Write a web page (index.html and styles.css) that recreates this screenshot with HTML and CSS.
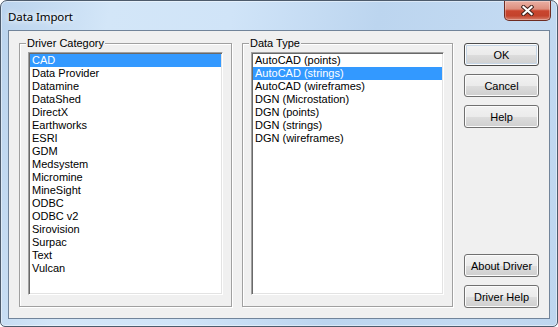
FILE: index.html
```html
<!DOCTYPE html>
<html lang="en">
<head>
  <meta charset="UTF-8">
  <title>Data Import</title>
  <link rel="stylesheet" href="styles.css">
</head>
<body>
  <div class="window">
    <div class="titlebar">
      <span class="title">Data Import</span>
      <button class="close" type="button">
        <svg width="13" height="11" viewBox="0 0 13 11">
          <path d="M2.5 2 L10.5 9 M10.5 2 L2.5 9" stroke="#41231e" stroke-width="4.2" stroke-linecap="square" fill="none"/>
          <path d="M2.5 2 L10.5 9 M10.5 2 L2.5 9" stroke="#fff" stroke-width="2.2" stroke-linecap="square" fill="none"/>
        </svg>
      </button>
    </div>

    <div class="client">
      <div class="group group-category">
        <span class="legend">Driver Category</span>
        <ul class="list">
          <li class="selected">CAD</li>
          <li>Data Provider</li>
          <li>Datamine</li>
          <li>DataShed</li>
          <li>DirectX</li>
          <li>Earthworks</li>
          <li>ESRI</li>
          <li>GDM</li>
          <li>Medsystem</li>
          <li>Micromine</li>
          <li>MineSight</li>
          <li>ODBC</li>
          <li>ODBC v2</li>
          <li>Sirovision</li>
          <li>Surpac</li>
          <li>Text</li>
          <li>Vulcan</li>
        </ul>
      </div>

      <div class="group group-type">
        <span class="legend">Data Type</span>
        <ul class="list">
          <li>AutoCAD (points)</li>
          <li class="selected">AutoCAD (strings)</li>
          <li>AutoCAD (wireframes)</li>
          <li>DGN (Microstation)</li>
          <li>DGN (points)</li>
          <li>DGN (strings)</li>
          <li>DGN (wireframes)</li>
        </ul>
      </div>

      <div class="actions">
        <button class="btn default" type="button">OK</button>
        <button class="btn" type="button">Cancel</button>
        <button class="btn" type="button">Help</button>
        <button class="btn push-down" type="button">About Driver</button>
        <button class="btn" type="button">Driver Help</button>
      </div>
    </div>
  </div>
</body>
</html>
```

FILE: styles.css
```css
html, body {
  margin: 0;
  padding: 0;
  background: #fff;
}

body {
  font-family: "Liberation Sans", Arial, sans-serif;
  font-size: 11px;
  color: #000;
}

.window {
  width: 558px;
  height: 327px;
  box-sizing: border-box;
  border: 1px solid #4d5b6c;
  border-radius: 7px 7px 5px 5px;
  background: linear-gradient(100deg, #bad3ed 0%, #d3e6f8 18%, #d0e4f8 38%, #bcd5ef 62%, #c3daf2 85%, #bed6ef 100%);
  box-shadow: inset 0 0 0 1px rgba(255, 255, 255, 0.45);
  display: flex;
  flex-direction: column;
  overflow: hidden;
}

.titlebar {
  height: 29px;
  display: flex;
  align-items: flex-start;
}

.title {
  margin: 8px 0 0 7px;
  font-family: "Noto Sans", "Open Sans", sans-serif;
  font-size: 11.5px;
  line-height: 16px;
  letter-spacing: -0.1px;
  text-shadow: 0 0 5px #fff, 0 0 9px #fff;
}

.close {
  margin: 0 6px 0 auto;
  padding: 0;
  width: 47px;
  height: 20px;
  border: 1px solid #6e2c22;
  border-top: none;
  border-radius: 0 0 5px 5px;
  background: linear-gradient(#eab0a4 0%, #de8f7e 42%, #c9452e 52%, #c3432c 78%, #d7806d 100%);
  box-shadow: inset 0 0 0 1px rgba(255, 255, 255, 0.3);
  display: flex;
  align-items: center;
  justify-content: center;
}

.client {
  margin: 0 7px;
  height: 289px;
  box-sizing: border-box;
  border: 1px solid #71849a;
  background: #f0f0f0;
  display: flex;
  align-items: flex-start;
  padding: 12px 10px 0 10px;
}

.group {
  position: relative;
  box-sizing: border-box;
  height: 264px;
  border: 1px solid #a0a0a0;
  box-shadow: inset 1px 1px 0 #fff, 1px 1px 0 #fff;
  padding: 8px;
}

.group-category {
  width: 213px;
}

.group-type {
  width: 211px;
  margin-left: 10px;
}

.legend {
  position: absolute;
  top: -7px;
  left: 6px;
  padding: 0 1px;
  background: #f0f0f0;
  line-height: 13px;
}

.list {
  list-style: none;
  margin: 0;
  padding: 1px;
  height: 243px;
  box-sizing: border-box;
  background: #fff;
  border: 1px solid;
  border-color: #a0a0a0 #fff #fff #a0a0a0;
  box-shadow: inset 1px 1px 0 #696969, inset -1px -1px 0 #e3e3e3;
}

.list li {
  height: 13px;
  line-height: 13px;
  padding-left: 2px;
  white-space: nowrap;
}

.list li.selected {
  background: #3399ff;
  color: #fff;
}

.actions {
  margin-left: 11px;
  width: 75px;
  height: 265px;
  display: flex;
  flex-direction: column;
  gap: 8px;
}

.btn {
  height: 23px;
  padding: 0;
  font-family: inherit;
  font-size: 11px;
  color: #000;
  border: 1px solid #707070;
  border-radius: 3px;
  background: linear-gradient(#f2f2f2 0%, #ebebeb 50%, #dddddd 51%, #cfcfcf 100%);
  box-shadow: inset 0 0 0 1px #fcfcfc;
}

.btn.default {
  border-color: #4c4c4c;
  box-shadow: inset 0 0 0 1px #fcfcfc, inset 0 0 0 2px #c6d6e6;
}

.push-down {
  margin-top: auto;
}
```
